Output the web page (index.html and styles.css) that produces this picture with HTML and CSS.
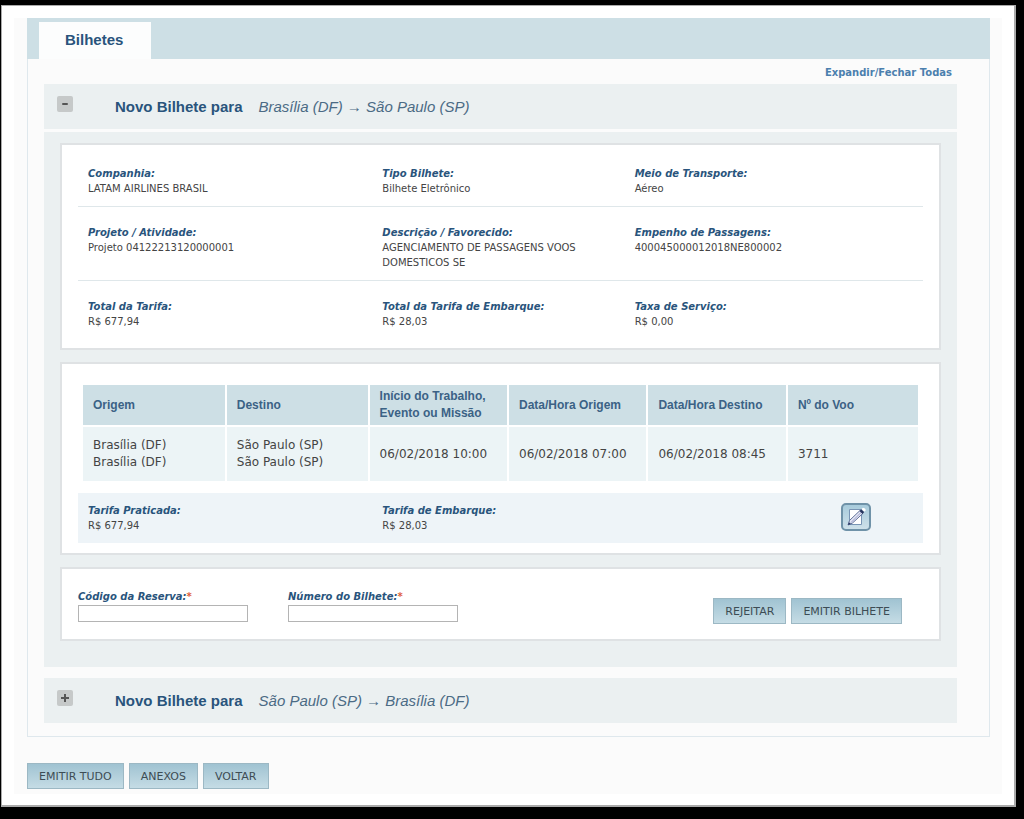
FILE: index.html
```
<!DOCTYPE html>
<html lang="pt-BR">
<head>
<meta charset="utf-8">
<meta name="viewport" content="width=device-width, initial-scale=1">
<title>Bilhetes</title>
<link rel="stylesheet" href="styles.css">
</head>
<body>
<div class="window">
  <main class="page">
    <section class="tabs">
      <nav class="tab-bar"><a class="tab" href="#bilhetes">Bilhetes</a></nav>
      <div class="tab-panel" id="bilhetes">
        <div class="toggle-all"><a href="#todas">Expandir/Fechar Todas</a></div>

        <header class="ticket-head">
          <button class="toggle" type="button" aria-label="Fechar">
            <svg viewBox="0 0 16 16" width="16" height="16"><rect x="5" y="7" width="6" height="2" rx="1" fill="#555"/></svg>
          </button>
          <h2>Novo Bilhete para</h2>
          <em class="route">Brasília (DF) → São Paulo (SP)</em>
        </header>
        <div class="ticket-body">
          <section class="card summary">
            <dl class="row">
              <div><dt>Companhia:</dt><dd>LATAM AIRLINES BRASIL</dd></div>
              <div><dt>Tipo Bilhete:</dt><dd>Bilhete Eletrônico</dd></div>
              <div><dt>Meio de Transporte:</dt><dd>Aéreo</dd></div>
            </dl>
            <dl class="row">
              <div><dt>Projeto / Atividade:</dt><dd>Projeto 04122213120000001</dd></div>
              <div><dt>Descrição / Favorecido:</dt><dd>AGENCIAMENTO DE PASSAGENS VOOS DOMESTICOS SE</dd></div>
              <div><dt>Empenho de Passagens:</dt><dd>400045000012018NE800002</dd></div>
            </dl>
            <dl class="row">
              <div><dt>Total da Tarifa:</dt><dd>R$ 677,94</dd></div>
              <div><dt>Total da Tarifa de Embarque:</dt><dd>R$ 28,03</dd></div>
              <div><dt>Taxa de Serviço:</dt><dd>R$ 0,00</dd></div>
            </dl>
          </section>

          <section class="card flights">
            <table class="flight-table">
              <colgroup><col class="c-place"><col class="c-place"><col class="c-date"><col class="c-date"><col class="c-date"><col></colgroup>
              <thead>
                <tr><th>Origem</th><th>Destino</th><th>Início do Trabalho,<br>Evento ou Missão</th><th>Data/Hora Origem</th><th>Data/Hora Destino</th><th>Nº do Voo</th></tr>
              </thead>
              <tbody>
                <tr><td>Brasília (DF)<br>Brasília (DF)</td><td>São Paulo (SP)<br>São Paulo (SP)</td><td>06/02/2018 10:00</td><td>06/02/2018 07:00</td><td>06/02/2018 08:45</td><td>3711</td></tr>
              </tbody>
            </table>
            <dl class="row fare">
              <div><dt>Tarifa Praticada:</dt><dd>R$ 677,94</dd></div>
              <div><dt>Tarifa de Embarque:</dt><dd>R$ 28,03</dd></div>
              <div class="edit-cell">
                <button class="edit" type="button" aria-label="Editar tarifa">
                  <svg viewBox="0 0 30 28" width="30" height="28">
                    <defs><linearGradient id="face" x1="0" y1="0" x2="0" y2="1"><stop offset="0" stop-color="#a6cadb"/><stop offset="1" stop-color="#cfe1ea"/></linearGradient></defs>
                    <rect x="1" y="1" width="28" height="26" rx="4" fill="url(#face)" stroke="#6f92a8" stroke-width="2"/>
                    <path d="M8.500 6.500h12v15h-12z" fill="#fff" stroke="#7894b4"/>
                    <path d="M7 22l1.500-4.500L19 7.500l3 2.800L11.500 20z" fill="#e4e8f5" stroke="#5f6e98"/>
                    <path d="M10 19.500L20.500 9" stroke="#9a9bc8" fill="none"/>
                    <path d="M18.500 8l1.700-1.700 3 2.800-1.700 1.800z" fill="#27365f"/>
                    <path d="M20.500 6l1.500-1.300q3 .3 2.600 2.600L23.200 8.700z" fill="#fff"/>
                    <path d="M7 22l1-2.800 1.800 1.700z" fill="#27365f"/>
                  </svg>
                </button>
              </div>
            </dl>
          </section>

          <form class="card issue">
            <div class="field"><label for="reserva">Código da Reserva:<span class="req">*</span></label><input id="reserva" type="text"></div>
            <div class="field"><label for="numero">Número do Bilhete:<span class="req">*</span></label><input id="numero" type="text"></div>
            <div class="actions">
              <button class="btn" type="button">REJEITAR</button>
              <button class="btn" type="button">EMITIR BILHETE</button>
            </div>
          </form>
        </div>

        <header class="ticket-head">
          <button class="toggle" type="button" aria-label="Expandir">
            <svg viewBox="0 0 16 16" width="16" height="16"><path d="M8 4v8M4 8h8" stroke="#555" stroke-width="2" fill="none"/></svg>
          </button>
          <h2>Novo Bilhete para</h2>
          <em class="route">São Paulo (SP) → Brasília (DF)</em>
        </header>
      </div>
    </section>
    <div class="actions">
      <button class="btn" type="button">EMITIR TUDO</button>
      <button class="btn" type="button">ANEXOS</button>
      <button class="btn" type="button">VOLTAR</button>
    </div>
  </main>
</div>
</body>
</html>
```

FILE: styles.css
```
* { box-sizing: border-box; }
html { background: #000; }
body {
  margin: 0;
  padding: 5px 8px 11px 1px;
  font: 10px/15px "DejaVu Sans", sans-serif;
  color: #444;
}
h2, dl, dd { margin: 0; }
.window {
  padding: 12px 12px 11px;
  background: #fff;
  border: 1px solid #aaa;
  border-right-width: 2px;
  border-bottom-width: 2px;
}
.page {
  padding: 0 12px 5px 13px;
  background: #fbfbfb;
}
.tab-bar {
  display: flex;
  height: 41px;
  padding: 4px 12px 0;
  background: #cddfe5;
}
.tab {
  padding: 9px 28px 0 26px;
  background: #fcfdfd;
  color: #29547c;
  font: bold 15px/18px "Liberation Sans", Arial, sans-serif;
  text-decoration: none;
}
.tab-panel {
  padding: 6px 32px 13px 16px;
  border: 1px solid #dfe8ed;
  border-top: 0;
}
.toggle-all {
  padding: 0 5px 4px;
  text-align: right;
  font-weight: bold;
}
.toggle-all a { color: #4b7fae; text-decoration: none; }
.ticket-head {
  display: flex;
  align-items: center;
  min-height: 45px;
  padding-left: 13px;
  background: #ebf0f1;
  color: #29547c;
  font-family: "Liberation Sans", Arial, sans-serif;
  font-size: 15px;
  line-height: 20px;
}
.ticket-head h2 { margin: 0 16px 0 42px; font-size: 15px; }
.route { color: #4b6b85; }
.toggle {
  width: 16px;
  height: 16px;
  margin-bottom: 5px;
  padding: 0;
  border: 0;
  border-radius: 2px;
  background: #c6c9c9;
}
.toggle svg, .edit svg { display: block; }
.ticket-body {
  display: flex;
  flex-direction: column;
  gap: 12px;
  margin: 3px 0 11px;
  padding: 11px 16px 26px;
  background: #ebf0f1;
}
.card {
  padding: 0 16px;
  background: #fff;
  border: 2px solid #dfe2e4;
}
.row {
  display: grid;
  grid-template-columns: 294fr 252fr 288fr;
  padding: 18px 0 10px 10px;
}
.summary { padding-top: 3px; padding-bottom: 9px; }
.summary .row + .row { border-top: 1px solid #dfe7ea; }
.row > div { padding-right: 40px; }
dt, label { color: #29547c; font-weight: bold; font-style: italic; }
.flights { padding-top: 21px; padding-bottom: 10px; }
.flight-table {
  width: calc(100% - 10px);
  margin: 0 5px;
  border-collapse: collapse;
  table-layout: fixed;
  font-size: 12px;
  line-height: 17px;
  text-align: left;
}
.c-place { width: 17.1%; }
.c-date { width: 16.7%; }
.flight-table th, .flight-table td { padding: 0 10px; border-left: 2px solid #fff; }
.flight-table th:first-child, .flight-table td:first-child { border-left: 0; }
.flight-table th {
  height: 41px;
  background: #cddfe5;
  color: #3b6285;
  font-family: "Liberation Sans", Arial, sans-serif;
  white-space: nowrap;
}
.flight-table td { height: 55px; background: #ecf4f6; border-top: 2px solid #fff; white-space: nowrap; }
.flights .fare {
  margin-top: 12px;
  padding: 10px 0 10px 10px;
  background: #eef4f8;
}
.row .edit-cell { display: flex; justify-content: flex-end; padding-right: 52px; }
.edit { height: 28px; padding: 0; border: 0; background: none; }
.issue {
  display: flex;
  gap: 40px;
  padding-top: 20px;
  padding-bottom: 15px;
}
.field { display: flex; flex-direction: column; gap: 1px; width: 170px; }
.req { color: #e06040; font-style: normal; }
.field input {
  width: 100%;
  height: 17px;
  padding: 0 3px;
  border: 1px solid #b4b4b4;
  background: #fff;
  font: inherit;
}
.actions { display: flex; gap: 5px; }
.issue .actions { margin: 9px 21px 0 auto; }
.page > .actions { padding-top: 26px; }
.btn {
  height: 26px;
  padding: 0 11px;
  border: 1px solid #9cb8c4;
  background: linear-gradient(#a0c3d2, #c5dce5);
  color: #3d4c54;
  font: 11px/15px "DejaVu Sans", sans-serif;
}
```
